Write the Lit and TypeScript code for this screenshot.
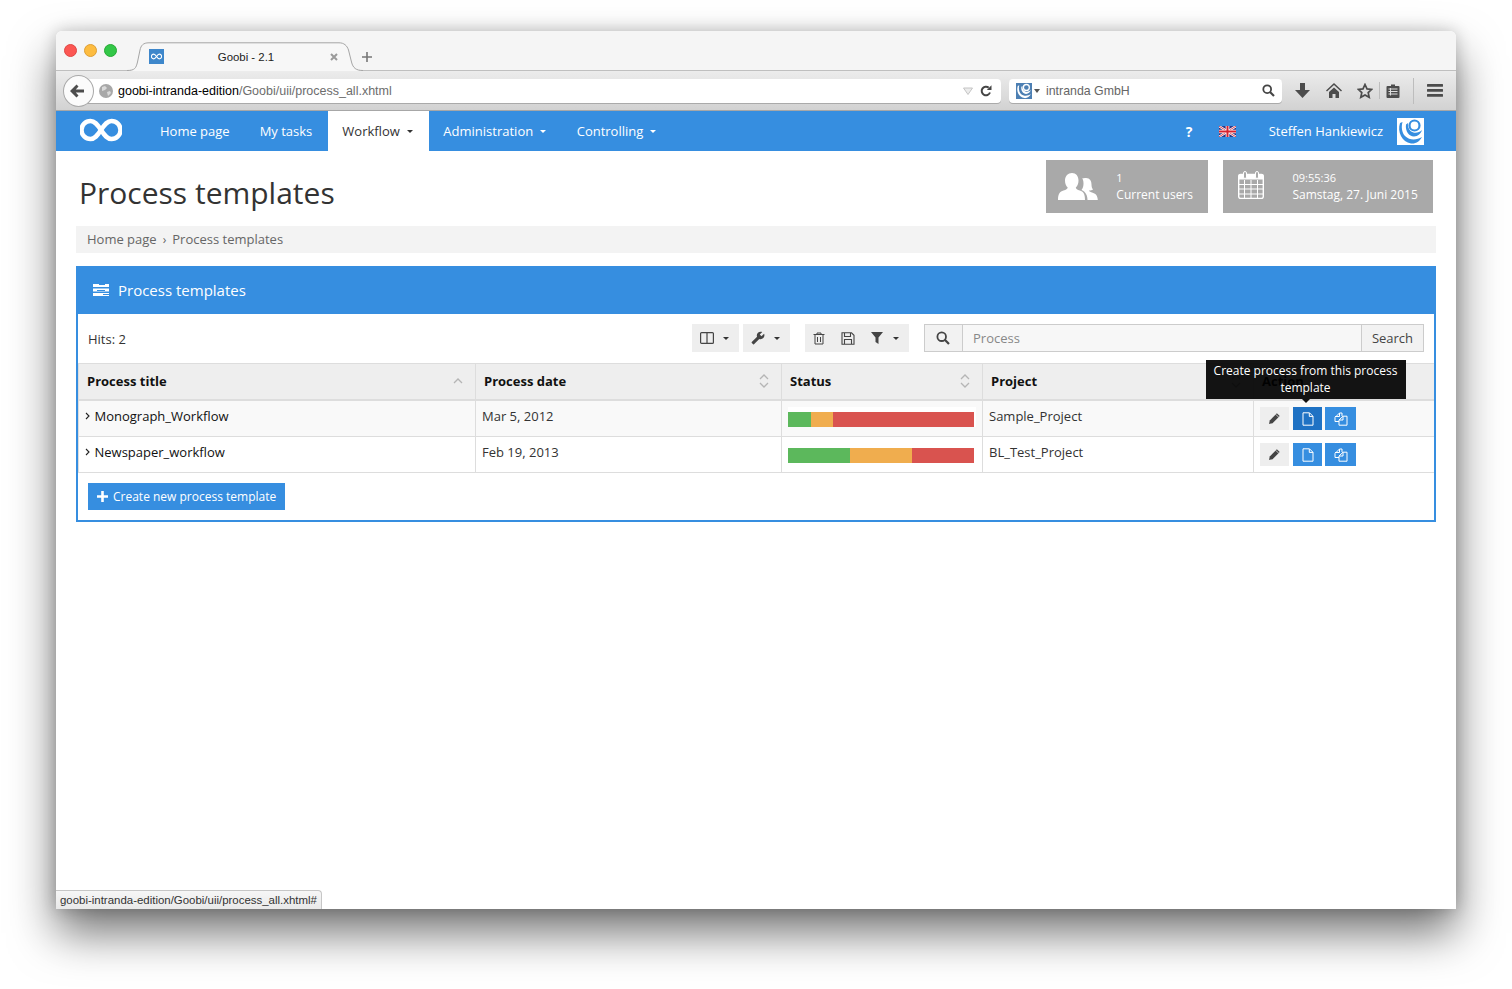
import { LitElement, html, css, svg } from "lit";
import { customElement } from "lit/decorators.js";

const ic = (w: number, h: number, vb: string, body: unknown, cls = "") =>
  html`<svg class=${cls} width=${w} height=${h} viewBox=${vb} aria-hidden="true">${body}</svg>`;

const infinity = (w: number, h: number, sw: number) =>
  ic(w, h, "0 0 42 24", svg`<path d="M21 12C17 6 14.5 3 10.5 3a9 9 0 0 0 0 18C14.5 21 17 18 21 12C25 6 27.5 3 31.5 3a9 9 0 0 1 0 18C27.5 21 25 18 21 12Z" fill="none" stroke="#fff" stroke-width=${sw}/>`);

const swirl = (s: number, fg: string, bg: string) =>
  ic(s, s, "0 0 27 27", svg`<rect width="27" height="27" fill=${bg}/>
    <path d="M3 5C0 14 5 24 14 25.5C19 26 23 23 25 19C20 22 13 23 8 18C5 15 4 9 5.5 4Z" fill=${fg}/>
    <path d="M9 6.5C8 13 12 18.5 17 18.5C21 18.5 24 15.5 25 12C22 15 17 16 13.5 13C11.5 11 10.5 8 11 5Z" fill=${fg}/>
    <circle cx="17.5" cy="7.5" r="5" fill="none" stroke=${fg} stroke-width="2.2"/>`);

const caret = html`<span class="caret"></span>`;

const sortBoth = ic(10, 16, "0 0 10 16", svg`<path d="M1 6l4-4 4 4M1 10l4 4 4-4" fill="none" stroke="#b5b5b5" stroke-width="1.3"/>`);
const sortUp = ic(10, 8, "0 0 10 8", svg`<path d="M1 6l4-4 4 4" fill="none" stroke="#b5b5b5" stroke-width="1.3"/>`);
const chevron = ic(5, 8, "0 0 5 8", svg`<path d="M1 1l3 3-3 3" fill="none" stroke="#222" stroke-width="1.1"/>`);
const pencil = ic(13, 13, "0 0 12 12", svg`<path d="M8.200 1.200l2.600 2.600-6.600 6.600L1 11l.6-3.200z" fill="#444"/><path d="M7.200 2.200l2.600 2.600" stroke="#eee" stroke-width=".7"/>`);
const docIcon = ic(12, 14, "0 0 12 14", svg`<path d="M1 .8h6.500L11 4.300v8.900H1zM7.300 1v3.400H11" fill="none" stroke="#fff" stroke-width="1"/>`);
const copyIcon = ic(14, 14, "0 0 14 14", svg`<path d="M5.500 1L1 5.500v4h4M5.500 1h2.500v3M5.500 1v3.500H1" fill="none" stroke="#fff" stroke-width="1"/><path d="M9 4.200L5 8v5.200h8v-9zM9 4.400V8H5.200" fill="none" stroke="#fff" stroke-width="1"/>`);

const rows = [
  { title: "Monograph_Workflow", date: "Mar 5, 2012", seg: [23, 22, 141], project: "Sample_Project", tip: true },
  { title: "Newspaper_workflow", date: "Feb 19, 2013", seg: [62, 62, 62], project: "BL_Test_Project", tip: false },
];

@customElement("app-root")
export class AppRoot extends LitElement {
  static styles = css`
    :host { display: block; width: 1512px; height: 989px; padding: 31px 56px 80px; box-sizing: border-box; background: #fff; overflow: hidden; font-family: "Open Sans", sans-serif; font-size: 13px; color: #333; }
    svg { display: block; flex: none; }
    .window { position: relative; width: 1400px; height: 878px; background: #fff; border-radius: 6px 6px 0 0; box-shadow: 0 24px 46px rgba(0,0,0,.55), 0 0 16px rgba(0,0,0,.2); display: flex; flex-direction: column; }
    .titlebar { height: 39px; flex: none; box-sizing: content-box; display: flex; background: #f5f5f5; border-bottom: 1px solid #bfbfbf; border-radius: 6px 6px 0 0; font-family: "Liberation Sans", sans-serif; position: relative; }
    .lights { display: flex; gap: 7px; padding: 13px 0 0 8px; width: 63px; box-sizing: content-box; }
    .lights i { display: block; width: 13px; height: 13px; border-radius: 50%; box-sizing: border-box; }
    .lights i:nth-child(1) { background: #fc5753; border: 1px solid #df4744; }
    .lights i:nth-child(2) { background: #fdbc40; border: 1px solid #de9f34; }
    .lights i:nth-child(3) { background: #33c748; border: 1px solid #27aa35; }
    .tab { position: relative; width: 236px; height: 29px; margin-top: 11px; padding: 0 23px 0 22px; box-sizing: border-box; display: flex; align-items: center; font-size: 11.4px; color: #222; z-index: 1; }
    .tab-bg { position: absolute; left: 0; top: 0; }
    .favicon { position: relative; width: 15px; height: 15px; background: #3e87cb; display: flex; align-items: center; justify-content: center; }
    .tab-title { position: relative; flex: 1; text-align: center; }
    .tab-close { position: relative; width: 12px; display: flex; justify-content: center; }
    .newtab { margin: 21px 0 0 -1px; width: 10px; height: 10px; z-index: 1; }
    .toolbar { height: 39px; flex: none; display: flex; align-items: center; padding: 0 11px 0 7px; background: linear-gradient(#ececec, #d2d2d2); border-bottom: 1px solid #a7a7a7; font-family: "Liberation Sans", sans-serif; font-size: 12.5px; }
    .back { position: relative; z-index: 1; width: 31px; height: 32px; box-sizing: border-box; border-radius: 50%; background: #fbfbfb; border: 1px solid #a9a9a9; display: flex; align-items: center; justify-content: center; padding-right: 3px; }
    .url { flex: 1; margin-left: -16px; height: 24px; background: #fff; border-radius: 0 4px 4px 0; box-shadow: 0 1px 0 #aaa; display: flex; align-items: center; padding: 0 9px 0 21px; white-space: nowrap; }
    .url .host { color: #000; margin: 1px 0 0 5px; }
    .url .path { color: #6d6d6d; margin-top: 1px; }
    .grow { flex: 1; }
    .search-bar { width: 273px; margin-left: 8px; height: 24px; box-sizing: border-box; background: #fff; border-radius: 4px; box-shadow: 0 1px 0 #aaa; display: flex; align-items: center; padding: 0 7px; color: #666; }
    .search-bar .label { margin-top: 1px; font-size: 12.35px; }
    .search-bar .tri { width: 0; height: 0; border: 3px solid transparent; border-top: 4px solid #555; border-bottom: 0; margin: 0 6px 0 2px; }
    .tb-icon { width: 20px; height: 20px; display: flex; align-items: center; justify-content: center; }
    .sep { width: 1px; background: #bdbdbd; }
    .nav { height: 40px; flex: none; background: #368ee0; display: flex; align-items: center; padding-left: 24px; color: #fff; font-size: 13px; }
    .logo { margin: 0 23px 2px 0; }
    .nav-item { height: 40px; padding: 0 15px; display: flex; align-items: center; white-space: nowrap; }
    .nav-item.wide { padding-right: 16px; }
    .nav-item.drop { padding: 0 14px; }
    .nav-item.active { background: #fff; color: #333; padding-right: 16.5px; }
    .nav-item.last { padding-left: 16.5px; }
    .caret { display: inline-block; width: 0; height: 0; border: 3.5px solid transparent; border-top: 3.5px solid currentColor; border-bottom: 0; margin-left: 7px; vertical-align: middle; }
    .nav-right { margin-left: auto; display: flex; align-items: center; padding-right: 32px; }
    .help { font-weight: 700; font-size: 14px; width: 9px; margin-right: 24px; }
    .flag { margin-right: 33px; }
    .user { margin-right: 14px; }
    .head { display: flex; justify-content: space-between; align-items: flex-start; padding: 9px 23px 13px 23px; }
    h1 { margin: 13px 0 0; font-size: 30px; line-height: 40px; font-weight: 400; color: #333; white-space: nowrap; }
    .stats { display: flex; gap: 15px; }
    .stat { height: 53px; background: #a9a9a9; color: #fff; display: flex; align-items: center; box-sizing: border-box; padding: 0 15px 2px 0; font-size: 12px; line-height: 17px; white-space: nowrap; }
    .stat small { display: block; font-size: 11px; }
    .stat .ico1 { margin: 2px 18px 0 12px; }
    .stat .ico2 { margin: -1px 28.5px 0 15px; }
    .stat.two { width: 210px; }
    .crumbs { margin: 0 20px; height: 27px; background: #f3f3f3; display: flex; align-items: center; padding: 0 0 2px 11px; box-sizing: border-box; color: #666; gap: 6px; }
    .crumbs span.s { font-size: 12px; padding-top: 2px; }
    .panel { margin: 13px 20px 0; border: 2px solid #368ee0; border-top: 0; }
    .panel-head { height: 48px; background: #368ee0; margin: 0 -2px; padding-left: 17px; display: flex; align-items: center; gap: 9px; color: #fff; font-size: 15px; }
    .ptool { height: 49px; display: flex; align-items: center; padding: 0 10px 1px; box-sizing: border-box; }
    .hits { margin: 1px auto 0 0; }
    .tgroup { height: 28px; background: #eee; display: flex; align-items: center; color: #333; box-sizing: border-box; }
    .tgroup .caret { margin-left: 8.5px; }
    .g1 { width: 47px; padding-left: 8px; margin-right: 4px; }
    .g2 { width: 47px; padding-left: 8px; margin-right: 15px; }
    .g3 { width: 104px; padding-left: 7px; margin-right: 15px; gap: 15px; }
    .g3 .caret { margin-left: -6px; }
    .sgroup { width: 500px; height: 28px; display: flex; box-sizing: border-box; border: 1px solid #ccc; }
    .sgroup .addon { width: 38px; background: #f2f2f2; display: flex; align-items: center; justify-content: center; border-right: 1px solid #ccc; box-sizing: border-box; padding-right: 2px; }
    .sgroup .field { flex: 1; background: #f7f7f7; padding-left: 10px; display: flex; align-items: center; color: #888; }
    .sgroup .go { width: 61px; background: #f2f2f2; border-left: 1px solid #ccc; display: flex; align-items: center; justify-content: center; color: #444; }
    .tr { display: grid; grid-template-columns: 397px 306px 201px 271px 181px; }
    .th { height: 35px; background: #eee; border-top: 1px solid #ddd; border-bottom: 2px solid #ddd; box-sizing: content-box; }
    .th > div { height: 35px; box-sizing: border-box; border-left: 1px solid #ddd; padding: 0 12px 1px 8px; display: flex; align-items: center; justify-content: space-between; font-weight: 700; color: #111; }
    .body-row { height: 35px; border-bottom: 1px solid #ddd; }
    .body-row.odd { background: #f9f9f9; }
    .body-row > div { border-left: 1px solid #ddd; padding: 7px 0 0 6px; white-space: nowrap; color: #333; line-height: 16px; }
    .body-row .t { display: flex; align-items: center; gap: 4.5px; color: #111; height: 16px; }
    .body-row > div.bcell { padding-top: 6px; }
    .bar-wrap { width: 188px; padding-top: 5px; background: #fff; }
    .body-row:not(.odd) .bar-wrap { background: transparent; }
    .bar { display: flex; width: 186px; height: 15px; box-shadow: inset 0 -1px 0 rgba(0,0,0,.15); }
    .bar i { display: block; height: 100%; }
    .g { background: #5cb85c; } .o { background: #f0ad4e; } .r { background: #d9534f; }
    .actions { display: flex; }
    .body-row > div.acell { padding: 6px 0 0 6px; }
    .abtn { height: 23px; display: flex; align-items: center; justify-content: center; position: relative; background: #368ee0; }
    .abtn.e { width: 29px; background: #eee; margin-right: 4px; }
    .abtn.n { width: 29px; margin-right: 3px; }
    .abtn.c { width: 31px; }
    .abtn.hover { background: #1f72c4; }
    .tip { position: absolute; left: 50%; bottom: calc(100% + 8px); transform: translateX(-51%); width: 200px; box-sizing: border-box; padding: 2px 6px 3px; background: rgba(0,0,0,.92); color: #fff; font-size: 12px; line-height: 17px; text-align: center; white-space: normal; z-index: 3; }
    .tip::after { content: ""; position: absolute; left: 50%; top: 100%; margin-left: -4px; border: 4px solid transparent; border-top-color: #111; border-bottom: 0; }
    .pfoot { height: 47px; display: flex; align-items: flex-start; padding: 10px 10px 0; box-sizing: border-box; }
    .add { height: 27px; background: #368ee0; color: #fff; display: flex; align-items: center; padding: 0 9px; gap: 5px; font-size: 12px; white-space: nowrap; }
    .status { position: absolute; left: 0; bottom: 0; height: 19px; width: 266px; box-sizing: border-box; background: linear-gradient(#f6f6f6, #e9e9e9); border: 1px solid #c6c6c6; border-left: 0; border-bottom: 0; border-radius: 0 4px 0 0; font-family: "Liberation Sans", sans-serif; font-size: 11.45px; color: #333; padding: 3px 0 0 4px; white-space: nowrap; }
  `;

  private bar(seg: number[]) {
    const c = ["g", "o", "r"];
    return html`<div class="bar-wrap"><div class="bar">${seg.map((w, i) => html`<i class=${c[i]} style="width:${w}px"></i>`)}</div></div>`;
  }

  render() {
    return html`
      <div class="window">
        <div class="titlebar">
          <div class="lights"><i></i><i></i><i></i></div>
          <div class="tab">
            ${ic(236, 29, "0 0 236 29", svg`<path d="M0 28.500C8 28.500 9 26 10.500 20L13 8C14 3.500 16 .8 22 .8H212C217 .8 220 3.500 221.500 8L224.500 20C226 26 229 28.500 236 28.500V29H0Z" fill="#f7f7f7"/><path d="M0 28.500C8 28.500 9 26 10.500 20L13 8C14 3.500 16 .8 22 .8H212C217 .8 220 3.500 221.500 8L224.500 20C226 26 229 28.500 236 28.500" fill="none" stroke="#a5a5a5"/>`, "tab-bg")}
            <span class="favicon">${infinity(11, 7, 4)}</span>
            <span class="tab-title">Goobi - 2.1</span>
            <span class="tab-close">${ic(8, 8, "0 0 8 8", svg`<path d="M1 1l6 6M7 1l-6 6" stroke="#9a9a9a" stroke-width="2"/>`)}</span>
          </div>
          <div class="newtab">${ic(10, 10, "0 0 10 10", svg`<path d="M5 0v10M0 5h10" stroke="#777" stroke-width="1.6"/>`)}</div>
        </div>
        <div class="toolbar">
          <div class="back">${ic(16, 14, "0 0 16 14", svg`<path d="M7.500 0.500L1 7l6.500 6.500 2-2L6.800 8.600H15V5.400H6.800L9.500 2.500z" fill="#4d4d4d"/>`)}</div>
          <div class="url">
            ${ic(14, 14, "0 0 14 14", svg`<circle cx="7" cy="7" r="7" fill="#a8a8a8"/><path d="M3 3l3-1 2 2-2 2-3 1zM8 8l3-1 1 2-3 3z" fill="#d9d9d9"/>`)}
            <span class="host">goobi-intranda-edition</span><span class="path">/Goobi/uii/process_all.xhtml</span>
            <span class="grow"></span>
            ${ic(10, 8, "0 0 10 8", svg`<path d="M.5 1h9L5 7.500z" fill="#ececec" stroke="#c4c4c4"/>`)}
            <span style="width:7px"></span>
            ${ic(12, 12, "0 0 12 12", svg`<path d="M10 7.500A4.300 4.300 0 1 1 8.700 2.600" fill="none" stroke="#444" stroke-width="2"/><path d="M6.800 5H11.500V.3z" fill="#444"/>`)}
          </div>
          <div class="search-bar">
            ${swirl(16, "#fff", "#4c7fb3")}<span class="tri"></span><span class="label">intranda GmbH</span><span class="grow"></span>
            ${ic(13, 13, "0 0 13 13", svg`<circle cx="5.200" cy="5.200" r="3.900" fill="none" stroke="#444" stroke-width="1.800"/><path d="M8 8l4 4" stroke="#444" stroke-width="2.200"/>`)}
          </div>
          <div class="tb-icon" style="margin-left:10px">${ic(15, 15, "0 0 15 15", svg`<path d="M5 0h5v7h5l-7.500 8L0 7h5z" fill="#4c4c4c"/>`)}</div>
          <div class="tb-icon" style="margin-left:12px">${ic(16, 15, "0 0 16 15", svg`<path d="M8 0L0 7.500l1 1L8 2l7 6.500 1-1zM3 9l5-4.500L13 9v6H9.500v-4h-3v4H3z" fill="#4c4c4c"/>`)}</div>
          <div class="tb-icon" style="margin-left:11px">${ic(16, 16, "0 0 16 16", svg`<path d="M8 1.500l2 4.400 4.700.5-3.500 3.200 1 4.700L8 11.900l-4.200 2.400 1-4.700L1.300 6.400 6 5.900z" fill="none" stroke="#4c4c4c" stroke-width="1.700"/>`)}</div>
          <div class="sep" style="margin-left:4px;height:17px"></div>
          <div class="tb-icon" style="margin-left:3px">${ic(14, 15, "0 0 14 15", svg`<path d="M1.500 3h11a1 1 0 0 1 1 1v10a1 1 0 0 1-1 1h-11a1 1 0 0 1-1-1V4a1 1 0 0 1 1-1zM5 3V1.500h4V3" fill="#4c4c4c"/><path d="M2.500 6h9M2.500 8.500h9M2.500 11h9" stroke="#ddd" stroke-width="1"/><path d="M4.500 5v7.500" stroke="#ddd"/>`)}</div>
          <div class="sep" style="margin-left:10px;height:26px"></div>
          <div class="tb-icon" style="margin-left:11px">${ic(16, 13, "0 0 16 13", svg`<path d="M1 0h14a1 1 0 0 1 0 2.800H1a1 1 0 0 1 0-2.800zM1 5h14a1 1 0 0 1 0 2.800H1a1 1 0 0 1 0-2.800zM1 10h14a1 1 0 0 1 0 2.800H1a1 1 0 0 1 0-2.800z" fill="#4c4c4c"/>`)}</div>
        </div>
        <div class="nav">
          <div class="logo">${infinity(42, 24, 4.5)}</div>
          <div class="nav-item">Home page</div>
          <div class="nav-item wide">My tasks</div>
          <div class="nav-item drop active">Workflow ${caret}</div>
          <div class="nav-item drop">Administration ${caret}</div>
          <div class="nav-item drop last">Controlling ${caret}</div>
          <div class="nav-right">
            <span class="help">?</span>
            <span class="flag">${ic(17, 11, "0 0 60 38", svg`<rect width="60" height="38" fill="#2b2f7f"/><path d="M0 0l60 38M60 0L0 38" stroke="#fff" stroke-width="8"/><path d="M0 0l60 38M60 0L0 38" stroke="#d8232f" stroke-width="3"/><path d="M30 0v38M0 19h60" stroke="#fff" stroke-width="13"/><path d="M30 0v38M0 19h60" stroke="#d8232f" stroke-width="7"/>`)}</span>
            <span class="user">Steffen Hankiewicz</span>
            ${swirl(27, "#368ee0", "#fff")}
          </div>
        </div>
        <div class="head">
          <h1>Process templates</h1>
          <div class="stats">
            <div class="stat">
              <span class="ico1">${ic(40, 27, "0 0 40 27", svg`<path d="M14 0c4 0 6.500 3 6.500 7.500 0 3-1 5.500-2.700 7 .2 1.500 1.500 2.300 4 3 3.500 1 5.200 3 5.200 9.500H0c0-6.500 2-8.500 5.500-9.500 2.500-.7 4-1.500 4.200-3-1.700-1.500-2.700-4-2.700-7C7 3 10 0 14 0z" fill="#fff"/><path d="M28 5c4 0 5.500 3 5.500 6.500 0 2 .5 4 1.500 5-1 .8-2.500 1-4 1 .2 1 1 1.300 3 2 3.500 1.200 5.500 2.500 5.800 7.500H29.500c0-4-1.500-8-6-10 1.500-2 2-4 2-6.500 0-2.500-.5-4-1.300-5C25 5.300 26.500 5 28 5z" fill="#fff"/>`)}</span>
              <div><small>1</small>Current users</div>
            </div>
            <div class="stat two">
              <span class="ico2">${ic(26, 28, "0 0 26 28", svg`<rect x=".7" y="3.500" width="24.600" height="24" rx="2" fill="none" stroke="#fff" stroke-width="1.400"/><path d="M.7 3.500h24.600v5H.7z" fill="#fff"/><path d="M1 13.500h24M1 18h24M1 23h24M6.500 9v18M13 9v18M19.500 9v18" stroke="#fff" stroke-width="1"/><rect x="5.500" y=".5" width="3" height="7" rx="1.500" fill="#a9a9a9" stroke="#fff"/><rect x="17.500" y=".5" width="3" height="7" rx="1.500" fill="#a9a9a9" stroke="#fff"/>`)}</span>
              <div><small>09:55:36</small>Samstag, 27. Juni 2015</div>
            </div>
          </div>
        </div>
        <div class="crumbs"><span>Home page</span><span class="s">›</span><span>Process templates</span></div>
        <div class="panel">
          <div class="panel-head">
            ${ic(16, 12, "0 0 16 12", svg`<path d="M0 0h16v3H0zM0 4.500h16v3H0zM0 9h16v3H0z" fill="#fff"/><path d="M6 0h6v1H6zM4 6h8v1H4zM10 10h6v1h-6z" fill="#368ee0"/>`)}
            <span>Process templates</span>
          </div>
          <div class="ptool">
            <span class="hits">Hits: 2</span>
            <div class="tgroup g1">${ic(14, 12, "0 0 14 12", svg`<rect x=".6" y=".6" width="12.800" height="10.800" rx="1" fill="none" stroke="#444" stroke-width="1.200"/><path d="M7 1v10" stroke="#444" stroke-width="1.200"/>`)}${caret}</div>
            <div class="tgroup g2">${ic(14, 14, "0 0 24 24", svg`<g transform="translate(24,0) scale(-1,1)"><path d="M22.700 19l-9.100-9.100c.9-2.300.4-5-1.500-6.900-2-2-5-2.400-7.400-1.300L9 6 6 9 1.600 4.700C.4 7.100.9 10.100 2.900 12.100c1.900 1.900 4.600 2.400 6.900 1.500l9.100 9.100c.4.4 1 .4 1.400 0l2.300-2.300c.5-.4.5-1.100.1-1.400z" fill="#444"/></g>`)}${caret}</div>
            <div class="tgroup g3">
              ${ic(14, 13, "0 0 14 13", svg`<path d="M1.500 2.500h11M5 2.500V1h4v1.500M3 2.500v9.500h8V2.500M5.500 5v5M8.500 5v5" fill="none" stroke="#444" stroke-width="1"/>`)}
              ${ic(14, 13, "0 0 14 13", svg`<path d="M1 .8h9.500L13 3.300v9H1zM3.500 1v3.500h6V1M3.500 12V7.500h7V12" fill="none" stroke="#444" stroke-width="1.100"/>`)}
              ${ic(14, 12, "0 0 14 12", svg`<path d="M1 0h12L8.500 5.500V12L5.500 10V5.500z" fill="#444"/>`)}
              ${caret}
            </div>
            <div class="sgroup">
              <div class="addon">${ic(14, 14, "0 0 14 14", svg`<circle cx="5.700" cy="5.700" r="4.300" fill="none" stroke="#444" stroke-width="1.800"/><path d="M8.800 8.800l4.200 4.200" stroke="#444" stroke-width="2.200"/>`)}</div>
              <div class="field">Process</div>
              <div class="go">Search</div>
            </div>
          </div>
          <div class="tr th">
            <div>Process title ${sortUp}</div>
            <div>Process date ${sortBoth}</div>
            <div>Status ${sortBoth}</div>
            <div>Project ${sortBoth}</div>
            <div>Action</div>
          </div>
          ${rows.map((r, i) => html`
            <div class="tr body-row ${i === 0 ? "odd" : ""}">
              <div><div class="t">${chevron}<span>${r.title}</span></div></div>
              <div>${r.date}</div>
              <div class="bcell">${this.bar(r.seg)}</div>
              <div>${r.project}</div>
              <div class="acell"><div class="actions">
                <div class="abtn e">${pencil}</div>
                <div class="abtn n ${r.tip ? "hover" : ""}">${docIcon}${r.tip ? html`<div class="tip">Create process from this process template</div>` : ""}</div>
                <div class="abtn c">${copyIcon}</div>
              </div></div>
            </div>`)}
          <div class="pfoot">
            <div class="add">${ic(11, 11, "0 0 11 11", svg`<path d="M5.500 0v11M0 5.500h11" stroke="#fff" stroke-width="2.600"/>`)}<span>Create new process template</span></div>
          </div>
        </div>
        <div class="status">goobi-intranda-edition/Goobi/uii/process_all.xhtml#</div>
      </div>
    `;
  }
}
